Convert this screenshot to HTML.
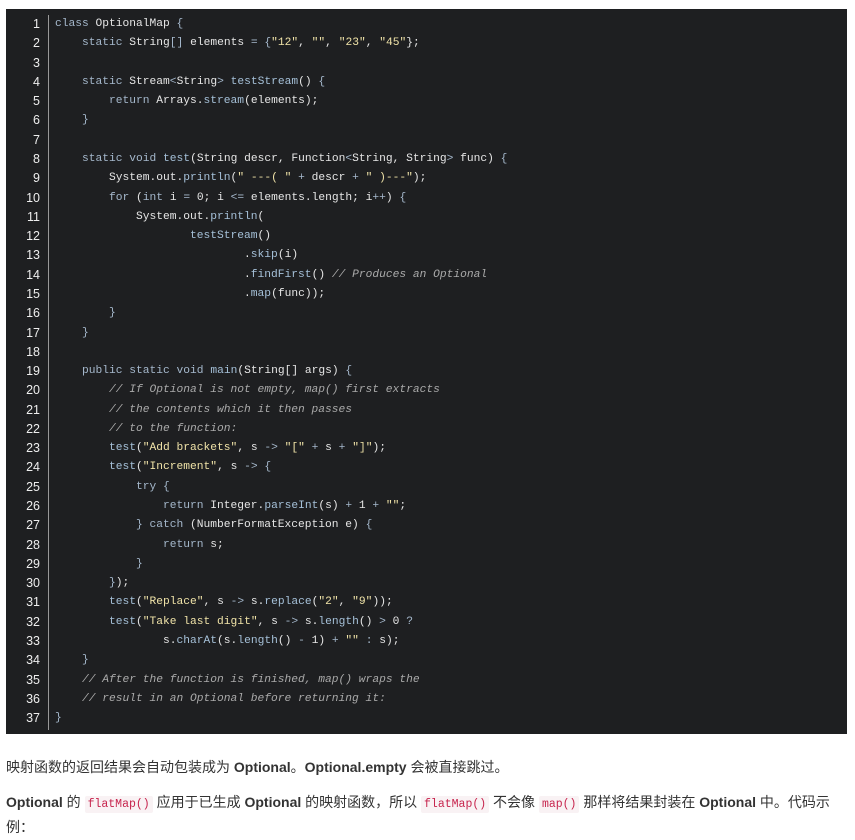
<!DOCTYPE html>
<html><head><meta charset="utf-8"><style>
body{margin:0;background:#fff;width:855px;height:840px;overflow:hidden}
.code{position:absolute;left:6px;top:9px;width:841px;height:725px;background:#1e1f21}
.g{position:absolute;left:0;top:6px;width:34px;text-align:right;color:#eee;font:12.5px/19.28px "Liberation Sans",sans-serif}
.bar{position:absolute;left:42px;top:6px;width:1px;height:715px;background:#999}
pre{position:absolute;left:49px;top:6px;margin:0;font:11.25px/19.28px "Liberation Mono",monospace;color:#e6e6e6}
.k{color:#a5b8cc}.s{color:#f0e3a8}.c{color:#aaa;font-style:italic}.f{color:#a5c0d8}
p{position:absolute;left:6px;margin:0;font:14px/25px "Liberation Sans","Noto Sans CJK SC",sans-serif;color:#333}
b{color:#333}
code{font:11.5px "Liberation Mono",monospace;color:#c7254e;background:#f9f2f4;padding:2px 3px;border-radius:2px}
</style></head><body>
<div class="code">
<div class="g">1<br>2<br>3<br>4<br>5<br>6<br>7<br>8<br>9<br>10<br>11<br>12<br>13<br>14<br>15<br>16<br>17<br>18<br>19<br>20<br>21<br>22<br>23<br>24<br>25<br>26<br>27<br>28<br>29<br>30<br>31<br>32<br>33<br>34<br>35<br>36<br>37</div>
<div class="bar"></div>
<pre><span class="k">class</span> OptionalMap <span class="k">{</span>
    <span class="k">static</span> String<span class="k">[]</span> elements <span class="k">=</span> <span class="k">{</span><span class="s">"12"</span>, <span class="s">""</span>, <span class="s">"23"</span>, <span class="s">"45"</span>};

    <span class="k">static</span> Stream<span class="k">&lt;</span>String<span class="k">&gt;</span> <span class="f">testStream</span>() <span class="k">{</span>
        <span class="k">return</span> Arrays.<span class="f">stream</span>(elements);
    <span class="k">}</span>

    <span class="k">static void</span> <span class="f">test</span>(String descr, Function<span class="k">&lt;</span>String, String<span class="k">&gt;</span> func) <span class="k">{</span>
        System.out.<span class="f">println</span>(<span class="s">" ---( "</span> <span class="k">+</span> descr <span class="k">+</span> <span class="s">" )---"</span>);
        <span class="k">for</span> (<span class="k">int</span> i <span class="k">=</span> 0; i <span class="k">&lt;=</span> elements.length; i<span class="k">++</span>) <span class="k">{</span>
            System.out.<span class="f">println</span>(
                    <span class="f">testStream</span>()
                            .<span class="f">skip</span>(i)
                            .<span class="f">findFirst</span>() <span class="c">// Produces an Optional</span>
                            .<span class="f">map</span>(func));
        <span class="k">}</span>
    <span class="k">}</span>

    <span class="k">public static void</span> <span class="f">main</span>(String[] args) <span class="k">{</span>
        <span class="c">// If Optional is not empty, map() first extracts</span>
        <span class="c">// the contents which it then passes</span>
        <span class="c">// to the function:</span>
        <span class="f">test</span>(<span class="s">"Add brackets"</span>, s <span class="k">-&gt;</span> <span class="s">"["</span> <span class="k">+</span> s <span class="k">+</span> <span class="s">"]"</span>);
        <span class="f">test</span>(<span class="s">"Increment"</span>, s <span class="k">-&gt; {</span>
            <span class="k">try {</span>
                <span class="k">return</span> Integer.<span class="f">parseInt</span>(s) <span class="k">+</span> 1 <span class="k">+</span> <span class="s">""</span>;
            <span class="k">} catch</span> (NumberFormatException e) <span class="k">{</span>
                <span class="k">return</span> s;
            <span class="k">}</span>
        <span class="k">}</span>);
        <span class="f">test</span>(<span class="s">"Replace"</span>, s <span class="k">-&gt;</span> s.<span class="f">replace</span>(<span class="s">"2"</span>, <span class="s">"9"</span>));
        <span class="f">test</span>(<span class="s">"Take last digit"</span>, s <span class="k">-&gt;</span> s.<span class="f">length</span>() <span class="k">&gt;</span> 0 <span class="k">?</span>
                s.<span class="f">charAt</span>(s.<span class="f">length</span>() <span class="k">-</span> 1) <span class="k">+</span> <span class="s">""</span> <span class="k">:</span> s);
    <span class="k">}</span>
    <span class="c">// After the function is finished, map() wraps the</span>
    <span class="c">// result in an Optional before returning it:</span>
<span class="k">}</span></pre>
</div>
<p style="top:755px">映射函数的返回结果会自动包装成为 <b>Optional</b>。<b>Optional.empty</b> 会被直接跳过。</p>
<p style="top:790px;width:830px"><b>Optional</b> 的 <code>flatMap()</code> 应用于已生成 <b>Optional</b> 的映射函数，所以 <code>flatMap()</code> 不会像 <code>map()</code> 那样将结果封装在 <b>Optional</b> 中。代码示例：</p>
</body></html>
